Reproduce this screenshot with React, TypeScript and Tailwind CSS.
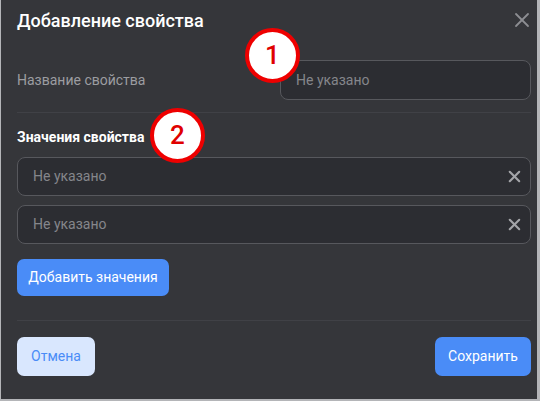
import { X } from 'lucide-react';

function Marker({ n, className }: { n: string; className: string }) {
  return (
    <div
      className={`absolute w-[55px] h-[55px] rounded-full bg-white border-[4px] border-[#ee0000] flex items-center justify-center text-[26px] font-medium text-[#e00000] ${className}`}
    >
      {n}
    </div>
  );
}

function ValueInput() {
  return (
    <div className="h-[39px] rounded-[8px] border border-[#57585d] bg-[#2c2d32] flex items-center pl-[15px] pr-[6px]">
      <span className="flex-1 text-[14px] text-[#85868b]">Не указано</span>
      <X className="w-[19px] h-[19px] text-[#a4a5a9]" strokeWidth={2.6} />
    </div>
  );
}

export default function App() {
  return (
    <div
      className="relative w-[540px] h-[401px] bg-[#35363a] border-l border-r-[3px] border-b-2 border-[#b4b5b8] overflow-hidden"
      style={{ fontFamily: 'Roboto, "Noto Sans", sans-serif' }}
    >
      <div className="ml-[16px] w-[514px] flex flex-col">
        {/* Заголовок */}
        <div className="h-[40px] flex items-center justify-between">
          <h1 className="text-[18px] font-medium text-white">Добавление свойства</h1>
          <X className="w-[24px] h-[24px] text-[#8d8e92] mr-[-3px]" strokeWidth={1.8} />
        </div>

        {/* Название */}
        <div className="mt-[20px] flex items-center justify-between">
          <span className="text-[14px] text-[#9c9da1]">Название свойства</span>
          <div className="w-[251px] h-[40px] rounded-[8px] border border-[#57585d] bg-[#2c2d32] flex items-center pl-[15px]">
            <span className="text-[14px] text-[#85868b]">Не указано</span>
          </div>
        </div>

        <div className="mt-[12px] h-px bg-[#404146]"></div>

        {/* Значения */}
        <h2 className="mt-[14px] h-[20px] leading-[20px] text-[14px] font-bold text-white">Значения свойства</h2>

        <div className="mt-[10px] flex flex-col gap-[9px]">
          <ValueInput />
          <ValueInput />
        </div>

        <div className="mt-[15px]">
          <button className="h-[37px] w-[152px] rounded-[7px] bg-[#4a8cf7] text-[14px] text-white">
            Добавить значения
          </button>
        </div>

        <div className="mt-[24px] h-px bg-[#404146]"></div>

        {/* Кнопки */}
        <div className="mt-[16px] flex items-center justify-between">
          <button className="h-[39px] w-[78px] rounded-[7px] bg-[#d9e7fe] text-[14px] text-[#4a8cf7]">
            Отмена
          </button>
          <button className="h-[39px] w-[96px] rounded-[7px] bg-[#4a8cf7] text-[14px] text-white">
            Сохранить
          </button>
        </div>
      </div>

      <Marker n="1" className="left-[244px] top-[28px]" />
      <Marker n="2" className="left-[149px] top-[108px]" />
    </div>
  );
}
